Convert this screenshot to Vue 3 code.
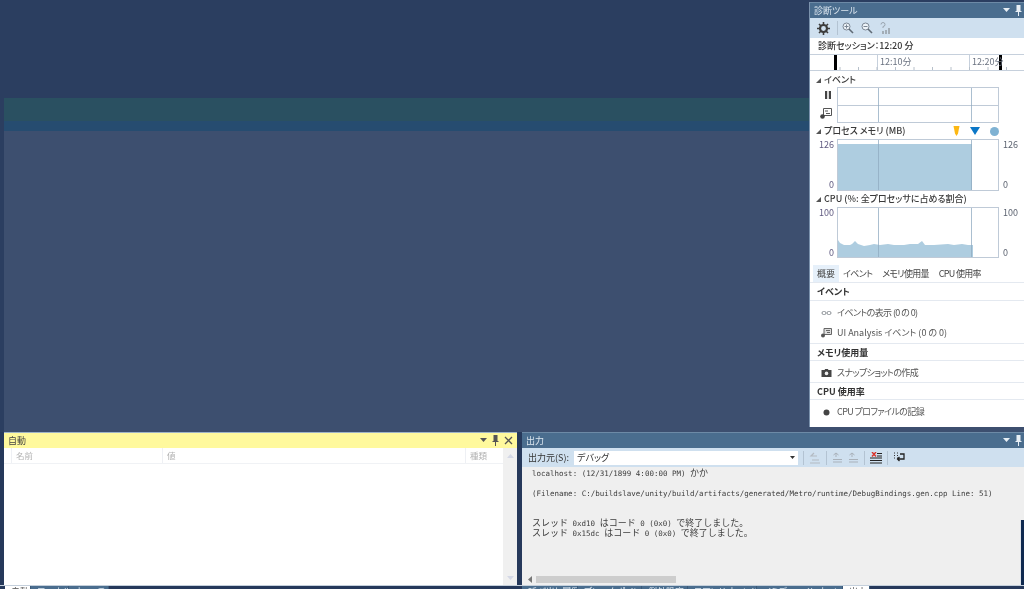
<script setup>
const timelineTicks = Array.from({ length: 10 }, (_, i) => 30 + i * 18.5)
const outputLines = [
  [['a', 'localhost: (12/31/1899 4:00:00 PM) '], ['c', 'かか']],
  [],
  [['a', '(Filename: C:/buildslave/unity/build/artifacts/generated/Metro/runtime/DebugBindings.gen.cpp Line: 51)']],
  [],
  [],
  [['c', 'スレッド'], ['a', ' 0xd10 '], ['c', 'はコード'], ['a', ' 0 (0x0) '], ['c', 'で終了しました。']],
  [['c', 'スレッド'], ['a', ' 0x15dc '], ['c', 'はコード'], ['a', ' 0 (0x0) '], ['c', 'で終了しました。']]
]
const leftTabs = [
  { label: '自動', w: 26, on: true },
  { label: 'ローカル', w: 38 },
  { label: 'ウォッチ 1', w: 40 }
]
const rightTabs = [
  { label: '呼び出し履歴', w: 56 },
  { label: 'ブレークポイント', w: 64 },
  { label: '例外設定', w: 46 },
  { label: 'コマンド ウィンドウ', w: 69 },
  { label: 'イミディエイト ウィンドウ', w: 86 },
  { label: '出力', w: 27, on: true }
]
const cpuPoints = '0,50 0,32 2,35 6,37 12,37 14,36 17,33 20,36 26,38 32,37 36,36 42,37 50,36 56,37 66,37 72,36 80,36 84,33 87,37 96,37 110,36 116,37 124,36 130,37 135,37 135,50'
</script>

<template>
  <div class="screen">
    <div class="workspace">
      <div class="editor">
        <div class="band-teal"></div>
        <div class="band-blue"></div>
        <div class="band-body"></div>
      </div>
      <div class="side">
        <section class="diag">
          <header class="title"><span>診断ツール</span>
            <span class="title-btns">
              <svg width="7" height="5" viewBox="0 0 7 5"><path d="M0 0h7L3.5 4z" fill="#e8eff5"/></svg>
              <svg width="7" height="11" viewBox="0 0 7 11"><path d="M1.500 0h4v6h1v1h-2.500v4H3V7H.5V6h1z" fill="#e8eff5"/></svg>
            </span>
          </header>
          <div class="tools">
            <svg class="gear" width="13" height="13" viewBox="0 0 13 13"><circle cx="6.500" cy="6.500" r="3.500" fill="none" stroke="#3c3c3c" stroke-width="2.200"/><path d="M6.500 0v3M6.500 10v3M0 6.500h3M10 6.500h3M2 2l2 2M9 9l2 2M11 2L9 4M4 9l-2 2" stroke="#3c3c3c" stroke-width="1.600"/></svg>
            <i class="tool-sep"></i>
            <svg width="12" height="12" viewBox="0 0 12 12"><circle cx="4.500" cy="4.500" r="3.500" fill="#eef4f9" stroke="#7b8794"/><path d="M7 7l4 4" stroke="#5f6a75" stroke-width="1.600"/><path d="M2.500 4.500h4M4.500 2.500v4" stroke="#7b8794"/></svg>
            <svg width="12" height="12" viewBox="0 0 12 12"><circle cx="4.500" cy="4.500" r="3.500" fill="#eef4f9" stroke="#7b8794"/><path d="M7 7l4 4" stroke="#5f6a75" stroke-width="1.600"/><path d="M2.500 4.500h4" stroke="#7b8794"/></svg>
            <svg width="12" height="12" viewBox="0 0 12 12"><path d="M1 2.500a2 2 0 1 1 2 2v1.500" fill="none" stroke="#9aa5af"/><path d="M5 12V8h2v4zM8 12V6h2v6zM2 12V9h2v3z" fill="#a3adb6"/></svg>
          </div>
          <div class="session">診断セッション：12:20 分</div>
          <div class="timeline">
            <div class="tl-cell tl-start"></div>
            <div class="tl-cell tl-a"></div>
            <div class="tl-cell tl-b"><span>12:10分</span></div>
            <div class="tl-cell tl-c"><span>12:20分</span></div>
            <svg class="tl-ticks" width="214" height="4" viewBox="0 0 214 4">
              <line v-for="x in timelineTicks" :key="x" :x1="x" :x2="x" y1="1" y2="4" stroke="#b7c0ca"/>
            </svg>
          </div>

          <h3 class="track-head head-event"><i class="caret"></i>イベント</h3>
          <div class="track-row row-events">
            <div class="track-icons">
              <svg width="8" height="8" viewBox="0 0 8 8"><path d="M1 0h2.200v8H1zM4.800 0H7v8H4.800z" fill="#444"/></svg>
              <svg width="12" height="11" viewBox="0 0 12 11"><path d="M3.500.500h8v7h-8z" fill="#fff" stroke="#555"/><path d="M5 3h3M6 5.500h4" stroke="#555"/><circle cx="2.500" cy="8.500" r="2.300" fill="#444"/></svg>
            </div>
            <div class="chart chart-events">
              <div class="ev-row"></div>
              <div class="ev-row"></div>
              <i class="guide g1"></i><i class="guide g2"></i>
            </div>
          </div>

          <h3 class="track-head"><i class="caret"></i>プロセス メモリ (MB)
            <span class="markers">
              <svg width="7" height="10" viewBox="0 0 7 10"><path d="M.5 0h6L5 7.500 3.500 10 2 7.500z" fill="#fdb813"/></svg>
              <svg width="10" height="8" viewBox="0 0 10 8"><path d="M0 0h10L5 8z" fill="#0b77c7"/></svg>
              <svg width="9" height="9" viewBox="0 0 9 9"><circle cx="4.500" cy="4.500" r="4.500" fill="#7fb2d3"/></svg>
            </span>
          </h3>
          <div class="track-row">
            <div class="axis axis-l"><span>126</span><span>0</span></div>
            <div class="chart">
              <div class="mem-fill"></div>
              <i class="guide g1"></i><i class="guide g2"></i>
            </div>
            <div class="axis axis-r"><span>126</span><span>0</span></div>
          </div>

          <h3 class="track-head"><i class="caret"></i>CPU (%: 全プロセッサに占める割合)</h3>
          <div class="track-row row-cpu">
            <div class="axis axis-l"><span>100</span><span>0</span></div>
            <div class="chart">
              <svg class="cpu" width="160" height="49" viewBox="0 0 160 49"><polygon :points="cpuPoints" fill="#aecde0"/></svg>
              <i class="guide g1"></i><i class="guide g2"></i>
            </div>
            <div class="axis axis-r"><span>100</span><span>0</span></div>
          </div>

          <nav class="tabs">
            <span class="tab tab-on">概要</span>
            <span class="tab">イベント</span>
            <span class="tab">メモリ使用量</span>
            <span class="tab">CPU 使用率</span>
          </nav>

          <h4 class="sec sec-first">イベント</h4>
          <div class="item item-first">
            <svg width="10" height="6" viewBox="0 0 10 6"><rect x=".5" y="1.500" width="4" height="3" rx="1.500" fill="none" stroke="#8a8f95"/><rect x="5.500" y="1.500" width="4" height="3" rx="1.500" fill="none" stroke="#8a8f95"/></svg>
            <span class="tight">イベントの表示 (0 の 0)</span>
          </div>
          <div class="item">
            <svg width="11" height="10" viewBox="0 0 11 10"><path d="M3 .500h7.500v6H3z" fill="#ddd" stroke="#666"/><path d="M5 2.500h4M6 4.500h3" stroke="#666"/><circle cx="2" cy="7.500" r="2" fill="#555"/></svg>
            <span>UI Analysis イベント (0 の 0)</span>
          </div>
          <h4 class="sec">メモリ使用量</h4>
          <div class="item item-solo">
            <svg width="10" height="8" viewBox="0 0 10 8"><path d="M0 1h3l.700-1h2.600L7 1h3v7H0z" fill="#444"/><circle cx="5" cy="4.400" r="1.800" fill="#eee"/></svg>
            <span class="tight">スナップショットの作成</span>
          </div>
          <h4 class="sec">CPU 使用率</h4>
          <div class="item item-first">
            <svg width="10" height="7" viewBox="0 0 10 7"><circle cx="5" cy="3.500" r="3" fill="#444"/></svg>
            <span class="tight">CPU プロファイルの記録</span>
          </div>
        </section>
        <div class="side-gap"></div>
      </div>
    </div>

    <div class="dock">
      <section class="autos">
        <header class="title title-active"><span>自動</span>
          <span class="title-btns">
            <svg width="7" height="5" viewBox="0 0 7 5"><path d="M0 0h7L3.500 4z" fill="#555"/></svg>
            <svg width="7" height="11" viewBox="0 0 7 11"><path d="M1.500 0h4v6h1v1h-2.500v4H3V7H.5V6h1z" fill="#555"/></svg>
            <svg width="9" height="9" viewBox="0 0 9 9"><path d="M1 1l7 7M8 1L1 8" stroke="#555" stroke-width="1.300"/></svg>
          </span>
        </header>
        <div class="autos-body">
          <div class="grid-area">
            <div class="cols">
              <span class="col col-name">名前</span>
              <span class="col col-value">値</span>
              <span class="col col-type">種類</span>
            </div>
          </div>
          <div class="vscroll">
            <svg width="7" height="4" viewBox="0 0 7 4"><path d="M0 4h7L3.500 0z" fill="#d4d8e6"/></svg>
            <svg width="7" height="4" viewBox="0 0 7 4"><path d="M0 0h7L3.500 4z" fill="#d4d8e6"/></svg>
          </div>
        </div>
      </section>

      <section class="output">
        <header class="title"><span>出力</span>
          <span class="title-btns">
            <svg width="7" height="5" viewBox="0 0 7 5"><path d="M0 0h7L3.500 4z" fill="#e8eff5"/></svg>
            <svg width="7" height="11" viewBox="0 0 7 11"><path d="M1.500 0h4v6h1v1h-2.500v4H3V7H.5V6h1z" fill="#e8eff5"/></svg>
          </span>
        </header>
        <div class="out-tools">
          <span class="out-label">出力元(S):</span>
          <div class="select"><span>デバッグ</span>
            <svg width="5" height="3" viewBox="0 0 5 3"><path d="M0 0h5L2.500 3z" fill="#333"/></svg>
          </div>
          <i class="o-sep"></i>
          <svg width="12" height="12" viewBox="0 0 12 12"><path d="M1 11h10M3 8h7M5 1L2 4h6" fill="none" stroke="#b3bac2" stroke-width="1.200"/></svg>
          <i class="o-sep"></i>
          <svg width="11" height="11" viewBox="0 0 11 11"><path d="M1 10h9M1 7.500h9M4 5V1L1.500 3M4 1l2.500 2" fill="none" stroke="#a9b1ba"/></svg>
          <svg width="11" height="11" viewBox="0 0 11 11"><path d="M1 10h9M1 7.500h9M4 5V1L1.500 3M4 1l2.500 2" fill="none" stroke="#a9b1ba"/></svg>
          <i class="o-sep"></i>
          <svg width="12" height="12" viewBox="0 0 12 12"><path d="M0 6h12M0 8.500h12M0 11h12" stroke="#222" stroke-width="1.200"/><path d="M2 0l4 4.500M6 0L2 4.500" stroke="#d9332b" stroke-width="1.400"/><path d="M7 1.500h5M7 4h5" stroke="#222"/></svg>
          <i class="o-sep"></i>
          <svg width="12" height="11" viewBox="0 0 12 11"><path d="M1 1h1M1 3.500h1M1 6h1M4 1h1M4 3.500h1M4 6h1" stroke="#333"/><path d="M7 2h4v5H4.500M6.500 5l-2 2 2 2" fill="none" stroke="#222" stroke-width="1.300"/></svg>
        </div>
        <div class="out-text">
          <div v-for="(line, i) in outputLines" :key="i" class="out-line"><span v-for="(run, j) in line" :key="j" :class="run[0] === 'c' ? 'cjk' : 'asc'">{{ run[1] }}</span></div>
        </div>
        <div class="hscroll">
          <svg width="4" height="7" viewBox="0 0 4 7"><path d="M4 0v7L0 3.500z" fill="#777"/></svg>
          <div class="thumb"></div>
        </div>
        <div class="corner-window"></div>
      </section>
    </div>

    <div class="strip">
      <div class="strip-left">
        <span v-for="t in leftTabs" :key="t.label" class="s-tab" :class="{ 's-on': t.on }" :style="{ width: t.w + 'px' }">{{ t.label }}</span>
      </div>
      <div class="strip-right">
        <span v-for="t in rightTabs" :key="t.label" class="s-tab" :class="{ 's-on': t.on }" :style="{ width: t.w + 'px' }">{{ t.label }}</span>
      </div>
    </div>
  </div>
</template>

<style>
html, body { margin: 0; background: #2b3e60; }
</style>

<style scoped>
.screen {
  width: 1024px;
  height: 589px;
  overflow: hidden;
  display: flex;
  flex-direction: column;
  background: #26395b;
  font-family: "Noto Sans CJK JP", "Liberation Sans", sans-serif;
  font-feature-settings: "palt";
  font-size: 9px;
  line-height: 12px;
  color: #333;
  filter: blur(0.5px);
}
h3, h4 { margin: 0; font: inherit; }
.workspace { height: 432px; display: flex; padding-left: 4px; background: #2b3e60; }
.editor { flex: 1; display: flex; flex-direction: column; padding-top: 98px; }
.band-teal { height: 23px; background: #2a5061; }
.band-blue { height: 10px; background: #264c70; }
.band-body { flex: 1; background: #3d4f6f; }
.side { width: 215px; display: flex; flex-direction: column; }
.side-gap { flex: 1; background: #3d4f6f; }
.diag {
  height: 425px;
  margin-top: 2px;
  background: #fff;
  border-left: 1px solid #7b92ad;
  box-sizing: border-box;
  display: flex;
  flex-direction: column;
}
.title {
  flex: none;
  height: 16px;
  display: flex;
  align-items: center;
  justify-content: space-between;
  padding-left: 4px;
  box-sizing: border-box;
  border-top: 1px solid #6d8aa6;
  background: #4a6d8e;
  color: #dde7f0;
  font-size: 9px;
}
.title-btns { display: flex; align-items: center; gap: 5px; padding-right: 2px; }
.title-active { background: #fff99d; color: #444; border-top-color: #9fb4c8; }
.title-active .title-btns { padding-right: 4px; }
.tools {
  flex: none;
  height: 20px;
  display: flex;
  align-items: center;
  gap: 7px;
  padding-left: 7px;
  background: #cfe0ef;
}
.tool-sep { width: 1px; height: 14px; margin-right: -3px; background: #b3c3d2; }
.session {
  flex: none;
  height: 16px;
  padding-left: 8px;
  line-height: 16px;
  font-weight: 500;
  color: #333;
}
.timeline {
  flex: none;
  position: relative;
  height: 17px;
  display: flex;
  border-top: 1px solid #c6d0dc;
  border-bottom: 1px solid #c6d0dc;
  box-sizing: border-box;
  color: #6a7280;
  font-size: 9px;
  line-height: 13px;
}
.tl-cell { flex: none; box-sizing: border-box; height: 100%; white-space: nowrap; }
.tl-start { width: 27px; border-right: 3px solid #000; }
.tl-a { width: 41px; border-right: 1px solid #c6d0dc; }
.tl-b { width: 92px; padding-left: 2px; border-right: 1px solid #c6d0dc; }
.tl-c { width: 32px; padding-left: 2px; border-right: 3px solid #000; }
.tl-ticks { position: absolute; left: 0; bottom: 0; }
.track-head {
  flex: none;
  height: 16px;
  line-height: 16px;
  padding-left: 6px;
  display: flex;
  align-items: center;
  gap: 2px;
  font-weight: 500;
  color: #3a3a3a;
  white-space: nowrap;
}
.head-event { padding-top: 2px; box-sizing: border-box; }
.caret {
  width: 0;
  height: 0;
  border-left: 5px solid transparent;
  border-bottom: 5px solid #555;
  margin-right: 1px;
}
.markers {
  margin-left: auto;
  padding-right: 25px;
  display: flex;
  align-items: center;
  gap: 10px;
}
.track-row { flex: none; display: flex; height: 52px; }
.row-events { height: 36px; }
.row-cpu { height: 51px; }
.track-icons {
  width: 27px;
  flex: none;
  display: flex;
  flex-direction: column;
  align-items: flex-end;
  justify-content: space-around;
  padding-right: 5px;
  box-sizing: border-box;
}
.chart {
  position: relative;
  width: 162px;
  flex: none;
  box-sizing: border-box;
  border: 1px solid #bfcad7;
  background: #fff;
}
.chart-events { display: flex; flex-direction: column; }
.ev-row { flex: 1; }
.ev-row + .ev-row { border-top: 1px solid #bfcad7; }
.guide { position: absolute; top: 0; bottom: 0; width: 1px; background: #8fa9c0; opacity: .75; }
.g1 { left: 40px; }
.g2 { left: 133px; }
.mem-fill { position: absolute; left: 0; bottom: 0; top: 4px; width: 134px; background: #aecde0; }
.cpu { position: absolute; left: 0; top: 0; }
.axis {
  flex: none;
  display: flex;
  flex-direction: column;
  justify-content: space-between;
  padding-bottom: 1px;
  color: #5c6370;
  font-size: 9px;
  line-height: 11px;
}
.row-cpu .axis { padding-bottom: 0; }
.axis-l { width: 24px; margin-right: 3px; align-items: flex-end; color: #5f5a80; }
.axis-r { padding-left: 4px; }
.tabs {
  flex: none;
  margin-top: 7px;
  height: 18px;
  padding-left: 3px;
  display: flex;
  align-items: center;
  border-bottom: 1px solid #e4e9f0;
  box-sizing: border-box;
  color: #444;
}
.tab { padding: 0 4px; height: 17px; line-height: 17px; margin-right: 2px; white-space: nowrap; letter-spacing: -.7px; }
.tab-on { background: #e6f0fa; letter-spacing: 0; margin-right: 0; }
.sec {
  flex: none;
  height: 17px;
  line-height: 17px;
  padding-left: 7px;
  font-weight: 700;
  color: #333;
  border-bottom: 1px solid #e4e9f0;
  box-sizing: border-box;
}
.sec-first { height: 18px; }
.item {
  flex: none;
  height: 20px;
  display: flex;
  align-items: center;
  padding-left: 11px;
  color: #555;
  white-space: nowrap;
}
.item svg { width: 11px; margin-right: 5px; flex: none; }
.tight { letter-spacing: -.6px; }
.item-first { margin-top: 2px; }
.item-solo { margin-top: 1px; padding-top: 1px; }
.item:has(+ .sec) { border-bottom: 1px solid #e4e9f0; height: 21px; box-sizing: border-box; }
.dock { height: 153px; display: flex; gap: 5px; padding-left: 4px; }
.autos {
  width: 513px;
  display: flex;
  flex-direction: column;
  background: #fff;
}
.autos-body { flex: 1; display: flex; min-height: 0; }
.grid-area { flex: 1; }
.cols {
  height: 15px;
  border-bottom: 1px solid #f0f2f5;
  color: #b3b3b3;
  font-size: 8.500px;
  line-height: 14px;
  display: flex;
}
.col { box-sizing: border-box; padding-left: 4px; border-left: 1px solid #eef0f4; height: 100%; flex: none; }
.col-name { margin-left: 7px; width: 151px; }
.col-value { width: 303px; }
.col-type { width: 38px; }
.vscroll {
  width: 14px;
  background: #f0f0f0;
  display: flex;
  flex-direction: column;
  align-items: center;
  justify-content: space-between;
  padding: 6px 0 5px;
  box-sizing: border-box;
}
.output {
  flex: 1;
  min-width: 0;
  position: relative;
  display: flex;
  flex-direction: column;
  background: #efefef;
}
.out-tools {
  flex: none;
  height: 19px;
  display: flex;
  align-items: center;
  gap: 5px;
  padding-left: 6px;
  background: #cfe0ef;
  color: #333;
}
.out-label { width: 44px; flex: none; white-space: nowrap; }
.select {
  width: 224px;
  height: 14px;
  flex: none;
  display: flex;
  align-items: center;
  justify-content: space-between;
  background: #fff;
  padding: 0 3px;
  box-sizing: border-box;
  margin-left: -3px;
  color: #333;
}
.o-sep { width: 1px; height: 14px; background: #b3c3d2; flex: none; }
.out-text {
  flex: 1;
  padding: 1px 0 0 10px;
  font-family: "DejaVu Sans Mono", "Noto Sans CJK JP", monospace;
  font-feature-settings: normal;
  color: #3c3c3c;
  white-space: pre;
  overflow: hidden;
}
.out-line { height: 10px; line-height: 10px; }
.asc { font-size: 7.500px; }
.cjk { font-family: "Noto Sans CJK JP", monospace; font-size: 9px; }
.hscroll {
  flex: none;
  height: 12px;
  display: flex;
  align-items: center;
  padding-left: 6px;
  gap: 4px;
}
.thumb { width: 140px; height: 7px; background: #cdcdcd; }
.corner-window {
  position: absolute;
  right: 0;
  bottom: 0;
  width: 3px;
  height: 65px;
  background: #0f2a50;
  border-left: 1px solid #dfe3e8;
}
.strip {
  height: 4px;
  display: flex;
  overflow: hidden;
  border-top: 1px solid #c4cfdb;
  box-sizing: border-box;
}
.strip-left { width: 522px; padding-left: 5px; box-sizing: border-box; display: flex; flex: none; }
.strip-right { display: flex; flex: none; }
.s-tab {
  flex: none;
  height: 14px;
  box-sizing: border-box;
  padding-left: 6px;
  background: #4a6d8e;
  color: #dbe6f0;
  border-right: 1px solid #3b5a7a;
  font-size: 9px;
  line-height: 12px;
  white-space: nowrap;
  overflow: hidden;
}
.s-on { background: #fff; color: #555; }
</style>
